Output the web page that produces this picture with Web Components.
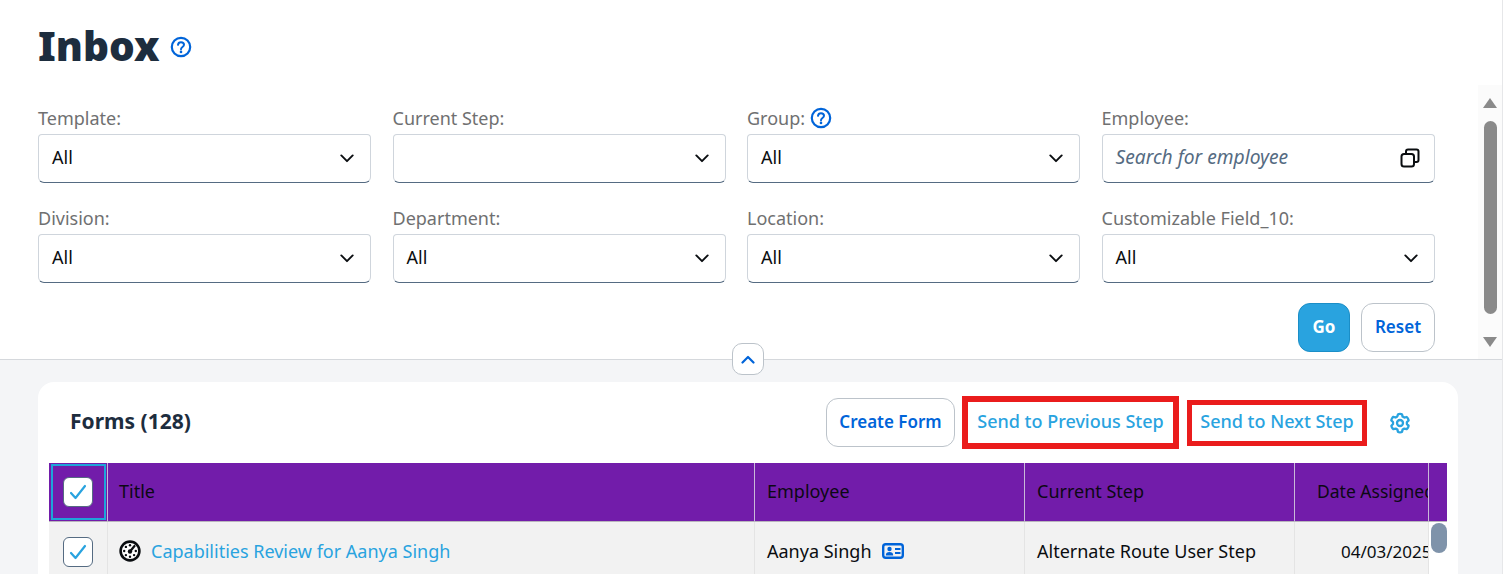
<!DOCTYPE html>
<html lang="en">
<head>
<meta charset="utf-8">
<title>Inbox</title>
<style>
  html, body { margin: 0; height: 100%; overflow: hidden; background: #fff; }
  body { font-family: "Noto Sans", "Open Sans", sans-serif; color: #1d2d3e; }
</style>
</head>
<body>
<inbox-page>
  <filter-panel slot="top">
    <page-title>Inbox</page-title>
    <filter-field label="Template:" value="All"></filter-field>
    <filter-field label="Current Step:"></filter-field>
    <filter-field label="Group:" value="All" help></filter-field>
    <filter-field label="Employee:" placeholder="Search for employee" kind="search"></filter-field>
    <filter-field label="Division:" value="All"></filter-field>
    <filter-field label="Department:" value="All"></filter-field>
    <filter-field label="Location:" value="All"></filter-field>
    <filter-field label="Customizable Field_10:" value="All"></filter-field>
  </filter-panel>
  <forms-card slot="bottom"></forms-card>
</inbox-page>

<script>
const HELP_ICON = `<svg viewBox="0 0 22 22" width="22" height="22" fill="none" stroke="#0064d9"><circle cx="11" cy="11" r="9.2" stroke-width="2.200"/><path d="M8 8.800a3 3 0 0 1 3-2.600c1.700 0 3 1.100 3 2.600 0 2.300-3 2.200-3 4.400" stroke-width="2" stroke-linecap="round"/><circle cx="11" cy="15.900" r="1.300" fill="#0064d9" stroke="none"/></svg>`;
const CHEVRON = `<svg viewBox="0 0 16 10" width="14" height="9" fill="none" stroke="#0a0d10" stroke-width="2.200" stroke-linecap="round" stroke-linejoin="round"><path d="M1.500 1.500 8 8l6.500-6.500"/></svg>`;
const COPY_ICON = `<svg viewBox="0 0 20 20" width="20" height="20" fill="none" stroke="#0a0d10" stroke-width="2"><rect x="1.500" y="6" width="12.500" height="12.500" rx="2.500"/><path d="M6 5V3.500a2 2 0 0 1 2-2h8.500a2 2 0 0 1 2 2V12a2 2 0 0 1-2 2H15"/></svg>`;
const TICK = `<svg viewBox="0 0 18 16" width="18" height="16" fill="none" stroke="#29a3df" stroke-width="2.200" stroke-linecap="round" stroke-linejoin="round"><path d="M2 9l4.500 5L16 2"/></svg>`;
const GAUGE = `<svg viewBox="0 0 22 22" width="22" height="22"><circle cx="11" cy="11" r="9.400" fill="#fff" stroke="#0a0d10" stroke-width="2.600"/><path d="M11 11.500 15.500 6" stroke="#0a0d10" stroke-width="2.200" stroke-linecap="round"/><g fill="#0a0d10"><circle cx="11" cy="5.200" r="1.200"/><circle cx="6.900" cy="6.900" r="1.200"/><circle cx="5.200" cy="11" r="1.200"/><circle cx="16.800" cy="11" r="1.200"/><circle cx="6.900" cy="15.100" r="1.200"/><circle cx="15.100" cy="15.100" r="1.200"/><circle cx="11" cy="16.800" r="1.200"/><circle cx="11" cy="11.500" r="2.200"/></g></svg>`;
const CARD_ICON = `<svg viewBox="0 0 22 16" width="22" height="16" fill="none"><rect x="1.200" y="1.200" width="19.600" height="13.600" rx="2.500" stroke="#0064d9" stroke-width="2.400"/><circle cx="7.500" cy="6" r="2.200" fill="#0064d9"/><path d="M3.800 12.500c0-2.600 1.500-3.500 3.700-3.500s3.700.9 3.700 3.500z" fill="#0064d9"/><path d="M13 6h5.500M13 10h5.500" stroke="#0064d9" stroke-width="2.200"/></svg>`;
const GEAR = `<svg viewBox="0 0 22 22" width="22" height="22" fill="none" stroke="#29a3df" stroke-width="2.300" stroke-linejoin="round"><circle cx="11" cy="11" r="3"/><path d="M9 2.300c.7-.6 3.300-.6 4 0l.6 2.300 1.700 1 2.300-.6c.8.400 2.100 2.600 2 3.500l-1.700 1.600v2l1.700 1.600c.1.900-1.200 3.100-2 3.500l-2.300-.6-1.700 1-.6 2.300c-.7.600-3.300.6-4 0l-.6-2.300-1.700-1-2.300.6c-.8-.4-2.100-2.600-2-3.500L4 12v-2L2.300 8.400c-.1-.9 1.200-3.100 2-3.500l2.300.6 1.700-1z"/></svg>`;

class InboxPage extends HTMLElement {
  constructor() {
    super();
    this.attachShadow({ mode: 'open' }).innerHTML = `
      <style>
        :host { display: block; height: 574px; overflow: hidden; }
        .page { display: flex; flex-direction: column; height: 100%; margin-right: 4px; border-right: 1px solid #e6e7e9; width: 1502px; }
        .top { flex: none; height: 359px; border-bottom: 1px solid #d5d8dc; position: relative; }
        .bottom { flex: 1; min-height: 0; background: #f4f5f7; padding: 22px 44px 0 38px; }
        .collapse { position: absolute; left: 732px; top: 343px; width: 32px; height: 32px; box-sizing: border-box;
          background: #fff; border: 1px solid #bcc3ca; border-radius: 10px; display: flex; align-items: center; justify-content: center; }
      </style>
      <div class="page">
      <div class="top">
        <slot name="top"></slot>
        <div class="collapse"><svg viewBox="0 0 14 9" width="14" height="9" fill="none" stroke="#0064d9" stroke-width="2.200" stroke-linecap="round" stroke-linejoin="round"><path d="M1.500 7.500 7 2l5.500 5.500"/></svg></div>
      </div>
      <div class="bottom"><slot name="bottom"></slot></div>
      </div>`;
  }
}

class FilterPanel extends HTMLElement {
  constructor() {
    super();
    this.attachShadow({ mode: 'open' }).innerHTML = `
      <style>
        :host { display: flex; height: 100%; }
        .main { flex: 1; min-width: 0; padding: 0 43px 0 38px; }
        .grid { display: grid; grid-template-columns: repeat(4, 333px); column-gap: 21.500px; row-gap: 22.500px; }
        .actions { display: flex; justify-content: flex-end; gap: 11px; margin-top: 20px; }
        button { font: 600 17px "Noto Sans", sans-serif; height: 49px; border-radius: 12px; box-sizing: border-box; padding: 0 0 2px; }
        .go { width: 52px; background: #29a3df; border: 1px solid #1b8ec7; color: #fff; font-weight: 700; }
        .reset { width: 74px; background: #fff; border: 1px solid #bcc3ca; color: #0064d9; }
        .bar { flex: none; width: 24px; padding-top: 98px; display: flex; flex-direction: column; align-items: center; background: linear-gradient(#fff 85px, #fbfbfb 85px); box-sizing: border-box; }
        .up, .down { width: 0; height: 0; border-left: 7.500px solid transparent; border-right: 7.500px solid transparent; }
        .up { border-bottom: 10px solid #8a8a8a; }
        .down { border-top: 10px solid #8a8a8a; }
        .thumb { width: 13px; height: 193px; margin: 13px 0 23px; background: #8a8a8a; border-radius: 7px; }
      </style>
      <div class="main">
        <slot name="title"></slot>
        <div class="grid"><slot></slot></div>
        <div class="actions"><button class="go">Go</button><button class="reset">Reset</button></div>
      </div>
      <div class="bar"><div class="up"></div><div class="thumb"></div><div class="down"></div></div>`;
    this.querySelector('page-title').slot = 'title';
  }
}

class PageTitle extends HTMLElement {
  constructor() {
    super();
    this.attachShadow({ mode: 'open' }).innerHTML = `
      <style>
        :host { display: flex; align-items: center; gap: 10px; height: 105px; padding-bottom: 13px; box-sizing: border-box; }
        h1 { margin: 0; font: 900 40.500px/1 "Noto Sans", sans-serif; color: #1d2d3e; }
        svg { display: block; margin-top: 2px; }
      </style>
      <h1><slot></slot></h1>${HELP_ICON}`;
  }
}

class FilterField extends HTMLElement {
  connectedCallback() {
    const label = this.getAttribute('label');
    const value = this.getAttribute('value') || '';
    const placeholder = this.getAttribute('placeholder');
    const icon = this.getAttribute('kind') === 'search' ? COPY_ICON : CHEVRON;
    this.attachShadow({ mode: 'open' }).innerHTML = `
      <style>
        :host { display: block; font-size: 18px; }
        .label { display: flex; align-items: center; gap: 5px; height: 29px; padding-bottom: 3px; box-sizing: border-box; color: #6f7071; line-height: 26px; }
        .label svg { display: block; }
        .box { height: 48.500px; box-sizing: border-box; padding: 0 16px 3px 13px; display: flex; align-items: center; justify-content: space-between;
          background: #fff; border: 1px solid #cfd5dc; border-bottom: 1.500px solid #556b82; border-radius: 4px 4px 6px 6px; color: #0a0d10; }
        .box.search { padding-right: 14px; }
        .ph { color: #556b82; font-style: italic; font-size: 19.200px; }
        .box svg { display: block; margin-top: 3px; }
      </style>
      <div class="label"><span>${label}</span>${this.hasAttribute('help') ? HELP_ICON : ''}</div>
      <div class="box ${placeholder ? 'search' : ''}">${placeholder ? `<span class="ph">${placeholder}</span>` : `<span>${value}</span>`}${icon}</div>`;
  }
}

class FormsCard extends HTMLElement {
  constructor() {
    super();
    this.attachShadow({ mode: 'open' }).innerHTML = `
      <style>
        :host { display: block; background: #fff; border-radius: 16px 16px 0 0; height: 192px; overflow: hidden; padding: 0 11px; font-size: 18px; }
        .bar { height: 81px; display: flex; align-items: center; padding: 0 36px 0 21px; color: #1d2d3e; }
        h2 { margin: 0 auto 3px 0; font: 700 21px "Noto Sans", sans-serif; }
        .create { height: 49px; width: 129px; box-sizing: border-box; border: 1px solid #bcc3ca; border-radius: 12px; background: #fff; color: #0064d9;
          font: 600 17px "Noto Sans", sans-serif; padding: 0 0 2px; margin-right: 7px; }
        .red { box-sizing: border-box; background: #fff; border: solid #ea1c1c; color: #29a3df; font-weight: 500; display: flex; align-items: center; justify-content: center; padding-bottom: 3px; }
        .prev { width: 217px; height: 53px; border-width: 6px; margin-right: 8px; }
        .next { width: 180px; height: 46px; border-width: 5px; margin-right: 22px; }
        .bar svg { display: block; }
        .grid { display: grid; grid-template-columns: 59px 647px 270px 270px 134px 18px; }
        .h { height: 59px; box-sizing: border-box; background: #721caa; color: #0c0814; display: flex; align-items: center; padding: 0 0 3px 11px; white-space: nowrap; overflow: hidden;
          border-right: 1px solid #c9b8d8; border-bottom: 1px solid #b9b5bd; }
        .c { height: 60px; box-sizing: border-box; background: #f2f2f2; color: #0a0d10; display: flex; align-items: center; padding: 0 0 2px 11px; white-space: nowrap; overflow: hidden; border-right: 1px solid #e4e4e4; }
        .h.pad, .c.pad { padding-left: 12px; }
        .h.date { padding-left: 22px; font-size: 17.500px; }
        .c.date { padding-left: 46px; font-size: 17px; }
        .sel { padding: 0; justify-content: center; }
        .focus { position: relative; }
        .focus::after { content: ""; position: absolute; inset: 1px 1px 1px 2px; border: 2px solid #1ea4d9; }
        .cb { width: 30px; height: 30px; box-sizing: border-box; background: #fff; border: 1px solid #556b82; border-radius: 6px; display: flex; align-items: center; justify-content: center; }
        .link { color: #29a3df; margin-left: 10px; }
        .name { display: flex; align-items: center; gap: 10px; }
        .last { background: #721caa; border: 0; border-bottom: 1px solid #b9b5bd; padding: 0; }
        .track { background: #fff; border: 0; padding: 0; position: relative; overflow: visible; }
        .knob { position: absolute; top: 1px; right: 0; width: 16px; height: 30px; border-radius: 8px; background: #7f93aa; }
      </style>
      <div class="bar">
        <h2>Forms (128)</h2>
        <button class="create">Create Form</button>
        <div class="red prev">Send to Previous Step</div>
        <div class="red next">Send to Next Step</div>
        ${GEAR}
      </div>
      <div class="grid">
        <div class="h sel focus"><span class="cb">${TICK}</span></div>
        <div class="h">Title</div>
        <div class="h pad">Employee</div>
        <div class="h pad">Current Step</div>
        <div class="h date">Date Assigned</div>
        <div class="h last"></div>
        <div class="c sel"><span class="cb">${TICK}</span></div>
        <div class="c">${GAUGE}<span class="link">Capabilities Review for Aanya Singh</span></div>
        <div class="c pad"><span class="name">Aanya Singh ${CARD_ICON}</span></div>
        <div class="c pad">Alternate Route User Step</div>
        <div class="c date">04/03/2025</div>
        <div class="c track"><div class="knob"></div></div>
      </div>`;
  }
}

customElements.define('inbox-page', InboxPage);
customElements.define('filter-panel', FilterPanel);
customElements.define('page-title', PageTitle);
customElements.define('filter-field', FilterField);
customElements.define('forms-card', FormsCard);
</script>
</body>
</html>
